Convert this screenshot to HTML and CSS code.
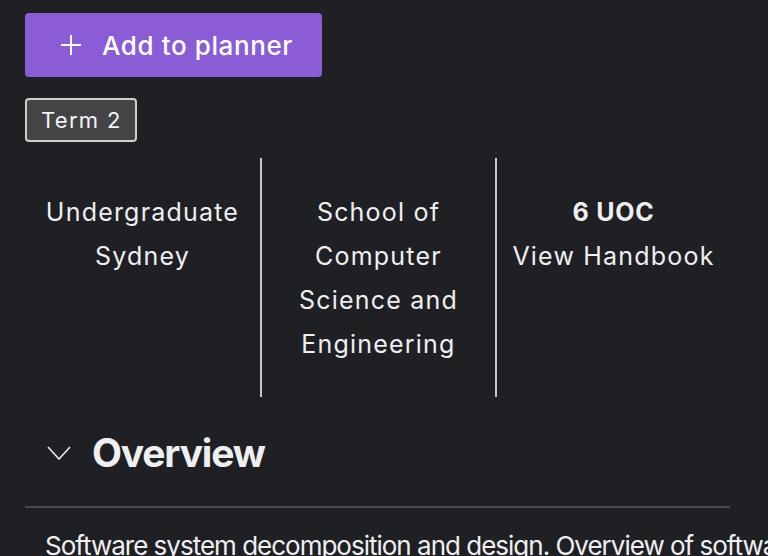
FILE: index.html
```html
<!DOCTYPE html>
<html lang="en">
<head>
<meta charset="utf-8">
<title>Course</title>
<link rel="stylesheet" href="styles.css">
</head>
<body>
<main class="page">
  <button class="add-btn" type="button">
    <svg class="plus" width="22" height="22" viewBox="0 0 22 22" aria-hidden="true"><path d="M11 1v20M1 11h20" stroke="#fff" stroke-width="2" fill="none"/></svg>
    <span>Add to planner</span>
  </button>
  <div class="tags"><span class="tag">Term 2</span></div>
  <div class="info">
    <div class="col">Undergraduate<br>Sydney</div>
    <div class="col">School of<br>Computer<br>Science and<br>Engineering</div>
    <div class="col"><strong>6 UOC</strong><br>View Handbook</div>
  </div>
  <div class="section-head">
    <svg class="chev" width="24" height="14" viewBox="0 0 24 14" aria-hidden="true"><path d="M1 1l11 12L23 1" stroke="#e8e8ea" stroke-width="1.6" fill="none"/></svg>
    <h2>Overview</h2>
  </div>
  <hr class="rule">
  <p class="desc">Software system decomposition and design. Overview of software architecture.</p>
</main>
</body>
</html>
```

FILE: styles.css
```css
html, body {
  margin: 0;
  padding: 0;
  background: #1f2023;
  color: #efeff1;
  font-family: Inter, "Noto Sans", sans-serif;
  overflow: hidden;
}
.page {
  width: 705px;
  padding: 13px 0 0 25px;
}
.add-btn {
  display: flex;
  align-items: center;
  gap: 20px;
  width: 297px;
  height: 64px;
  padding: 0 0 0 35px;
  border: none;
  border-radius: 4px;
  background: #8a5cd6;
  color: #fff;
  font-family: inherit;
  font-size: 26px;
  font-weight: 500;
  letter-spacing: 0.6px;
}
.tags {
  margin-top: 21px;
  display: flex;
}
.tag {
  display: inline-block;
  height: 40px;
  line-height: 40px;
  padding: 0 13px 0 14px;
  border: 2px solid #cfcfcf;
  border-radius: 4px;
  background: #444446;
  font-size: 22px;
  letter-spacing: 1.3px;
  color: #f3f3f3;
}
.info {
  display: grid;
  grid-template-columns: repeat(3, 1fr);
  margin-top: 16px;
}
.col {
  text-align: center;
  font-size: 25px;
  letter-spacing: 1.2px;
  line-height: 44px;
  padding: 32px 0 31px;
}
.col + .col {
  border-left: 2px solid #c8c8c8;
}
.col strong { font-weight: 700; letter-spacing: 0.8px; }
.section-head {
  display: flex;
  align-items: center;
  gap: 21px;
  padding-left: 22px;
  margin-top: 24px;
}
.section-head h2 {
  margin: 0;
  font-size: 39px;
  letter-spacing: -1.2px;
  font-weight: 700;
  line-height: 64px;
}
.rule {
  margin: 21px 0 0;
  border: none;
  height: 2px;
  background: #4a4a4c;
}
.desc {
  margin: 20px 0 0;
  padding-left: 20px;
  font-size: 26px;
  letter-spacing: -1px;
  line-height: 36px;
  white-space: nowrap;
}
```
